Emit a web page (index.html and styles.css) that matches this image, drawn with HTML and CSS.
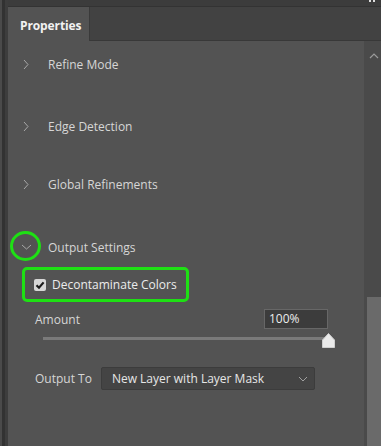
FILE: index.html
```html
<!DOCTYPE html>
<html>
<head>
<meta charset="utf-8">
<link rel="stylesheet" href="styles.css">
</head>
<body>
<div class="app">
  <div class="edge"><div class="e1"></div><div class="e2"></div><div class="e3"></div></div>
  <div class="main">
    <div class="topstrip">
      <svg class="dots" width="8" height="3" viewBox="0 0 8 3"><rect x="1" y="0" width="2" height="2" fill="#ddd"/><rect x="5" y="0" width="2" height="2" fill="#ddd"/></svg>
    </div>
    <div class="tabbar">
      <div class="tab">Properties</div>
      <div class="tabfill"></div>
    </div>
    <div class="body">
      <div class="content">
        <div class="section">
          <svg class="chev" width="6" height="11" viewBox="0 0 6 11"><path d="M1 1 L5 5.5 L1 10" fill="none" stroke="#a8a8a8" stroke-width="1"/></svg>
          <span class="title">Refine Mode</span>
        </div>
        <div class="section">
          <svg class="chev" width="6" height="11" viewBox="0 0 6 11"><path d="M1 1 L5 5.5 L1 10" fill="none" stroke="#a8a8a8" stroke-width="1"/></svg>
          <span class="title">Edge Detection</span>
        </div>
        <div class="section">
          <svg class="chev" width="6" height="11" viewBox="0 0 6 11"><path d="M1 1 L5 5.5 L1 10" fill="none" stroke="#a8a8a8" stroke-width="1"/></svg>
          <span class="title">Global Refinements</span>
        </div>
        <div class="section open">
          <span class="chevwrap">
            <svg class="chevdown" width="11" height="6" viewBox="0 0 11 6"><path d="M1 1 L5.5 5 L10 1" fill="none" stroke="#a8a8a8" stroke-width="1"/></svg>
            <span class="ring"></span>
          </span>
          <span class="title">Output Settings</span>
        </div>
        <div class="checkrow">
          <span class="checkbox"><svg width="12" height="12" viewBox="0 0 12 12"><path d="M2.5 6.2 L5 8.7 L9.6 3.4" fill="none" stroke="#1a1a1a" stroke-width="2.2"/></svg></span>
          <span class="checklabel">Decontaminate Colors</span>
        </div>
        <div class="amountrow">
          <span class="label">Amount</span>
          <span class="numbox">100%</span>
        </div>
        <div class="slider">
          <div class="track"></div>
          <svg class="thumb" width="13" height="15" viewBox="0 0 13 15"><path d="M6.5 0.5 L12.5 7 L12.5 14.5 L0.5 14.5 L0.5 7 Z" fill="#eaeaea" stroke="#cfcfcf" stroke-width="1"/></svg>
        </div>
        <div class="outrow">
          <span class="label">Output To</span>
          <span class="select">
            <span>New Layer with Layer Mask</span>
            <svg width="10" height="6" viewBox="0 0 10 6"><path d="M1 1 L5 5 L9 1" fill="none" stroke="#a0a0a0" stroke-width="1"/></svg>
          </span>
        </div>
      </div>
      <div class="scrollbar">
        <svg class="up" width="10" height="6" viewBox="0 0 10 6"><path d="M1 5 L5 1 L9 5" fill="none" stroke="#9a9a9a" stroke-width="1.2"/></svg>
        <div class="thumbbar"></div>
      </div>
    </div>
  </div>
</div>
</body>
</html>
```
FILE: styles.css
```css
html, body {
  margin: 0;
  padding: 0;
  background: #535353;
}
body {
  width: 381px;
  height: 446px;
  overflow: hidden;
  font-family: "Open Sans", "Noto Sans", sans-serif;
  font-size: 12px;
  color: #d8d8d8;
}
.app {
  display: flex;
  height: 446px;
}
.edge {
  display: flex;
  width: 8px;
  flex: none;
}
.e1 { width: 2px; background: #4a4a4a; }
.e2 { width: 3px; background: #323232; }
.e3 { width: 3px; background: #3d3d3d; }
.main {
  flex: 1;
  display: flex;
  flex-direction: column;
  min-width: 0;
}
.topstrip {
  height: 6px;
  background: #3c3c3c;
  border-bottom: 1px solid #333;
  position: relative;
  overflow: hidden;
}
.dots {
  position: absolute;
  right: 5px;
  top: 0;
}
.tabbar {
  display: flex;
  height: 34px;
  background: #424242;
}
.tab {
  width: 82px;
  background: #535353;
  border-right: 1px solid #3a3a3a;
  color: #f2f2f2;
  font-weight: 700;
  font-size: 12px;
  padding-left: 12px;
  padding-top: 10px;
  box-sizing: border-box;
  letter-spacing: -0.1px;
}
.tabfill {
  flex: 1;
  border-bottom: 1px solid #383838;
}
.body {
  flex: 1;
  display: flex;
}
.content {
  flex: 1;
  display: flex;
  flex-direction: column;
  padding-top: 11px;
}
.section {
  height: 24px;
  display: flex;
  align-items: center;
  margin-bottom: 36px;
}
.section:nth-child(2) { margin-top: 2px; margin-bottom: 34px; }
.section.open {
  margin-top: 3px;
  margin-bottom: 8px;
}
.chev {
  margin-left: 15px;
  margin-right: 19px;
}
.title {
  color: #d6d6d6;
  white-space: nowrap;
}
.chevwrap {
  position: relative;
  width: 11px;
  height: 6px;
  margin-left: 13px;
  margin-right: 16px;
  display: flex;
}
.ring {
  position: absolute;
  left: -11px;
  top: -13px;
  width: 25px;
  height: 24px;
  border: 3px solid #1ee014;
  border-radius: 50%;
}
.checkrow {
  margin-left: 14px;
  width: 167px;
  height: 35px;
  box-sizing: border-box;
  border: 3px solid #1ee014;
  border-radius: 5px;
  display: flex;
  align-items: center;
  padding-left: 9px;
}
.checkbox {
  width: 12px;
  height: 12px;
  background: #d6d6d6;
  border-radius: 2px;
  display: flex;
  margin-right: 6px;
}
.checklabel {
  color: #ececec;
  white-space: nowrap;
}
.amountrow {
  display: flex;
  align-items: center;
  justify-content: space-between;
  margin-top: 7px;
  padding-left: 27px;
  width: 320px;
  box-sizing: border-box;
}
.label {
  color: #d6d6d6;
  white-space: nowrap;
}
.numbox {
  width: 64px;
  height: 20px;
  box-sizing: border-box;
  background: #3c3c3c;
  border: 1px solid #676767;
  color: #ececec;
  padding-left: 4px;
  line-height: 17px;
}
.slider {
  position: relative;
  margin-left: 35px;
  width: 285px;
  height: 19px;
}
.track {
  margin-top: 8px;
  height: 3px;
  background: #7a7a7a;
}
.thumb {
  position: absolute;
  right: -7px;
  top: 4px;
}
.outrow {
  display: flex;
  align-items: center;
  margin-top: 19px;
  padding-left: 27px;
}
.select {
  margin-left: 9px;
  width: 214px;
  height: 23px;
  box-sizing: border-box;
  background: #444444;
  border: 1px solid #3c3c3c;
  border-radius: 2px;
  display: flex;
  align-items: center;
  justify-content: space-between;
  padding-left: 10px;
  padding-right: 6px;
  color: #e6e6e6;
}
.scrollbar {
  width: 17px;
  flex: none;
  background: #4a4a4a;
  display: flex;
  flex-direction: column;
  align-items: flex-end;
}
.up {
  margin-top: 12px;
  margin-right: 2px;
}
.thumbbar {
  margin-top: 238px;
  width: 14px;
  flex: 1;
  background: #6a6a6a;
}
```
